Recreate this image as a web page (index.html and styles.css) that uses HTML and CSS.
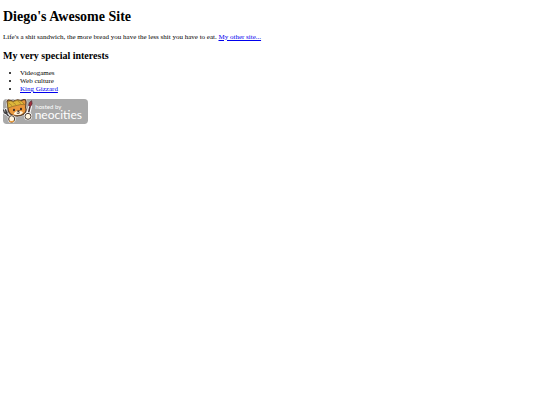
FILE: index.html
```
<!doctype html>
<html lang="en">

<head>
    <meta charset="utf-8">
    <meta name="viewport" content="width=device-width, initial-scale=1">
    <title>Diego's Awesome Site</title>
    <link rel="stylesheet" href="styles.css">
</head>

<body>
<h1>Diego's Awesome Site</h1>
<p>Life's a shit sandwich, the more bread you have the less shit you have to eat. <a href="#">My other site...</a></p>
<h2>My very special interests</h2>
<ul>
    <li>Videogames</li>
    <li>Web culture</li>
    <li><a href="#">King Gizzard</a></li>
</ul>
<!-- hosting badge -->
<a class="badge" href="#" aria-label="hosted by neocities">
    <svg width="85" height="25" viewBox="0 0 255 75">
        <rect width="255" height="75" rx="11" fill="#a9a9a9"/>
        <!-- fork -->
        <path d="M19 54L9 42M2 33L4 41Q7 45 12 42L14 31M8 32L9 41" fill="none" stroke="#fff" stroke-width="8" stroke-linecap="round"/>
        <path d="M19 54L9 42M2 33L4 41Q7 45 12 42L14 31M8 32L9 41" fill="none" stroke="#39383b" stroke-width="4" stroke-linecap="round"/>
        <!-- brush -->
        <path d="M76 44L82 21" stroke="#fff" stroke-width="11" stroke-linecap="round"/>
        <path d="M76 44L81 23" stroke="#4b3434" stroke-width="5"/>
        <path d="M77 20Q77 9 86 5Q90 14 83 23Z" fill="#a42f3c" stroke="#49262d" stroke-width="2"/>
        <!-- cat -->
        <path d="M15 24L12 7Q13 1 22 4L31 7Q43 -1 53 5L64 1Q70 2 69 12L68 26Q73 39 61 46Q47 54 30 49Q13 43 15 24Z" fill="#e99a3b" stroke="#fff" stroke-width="7"/>
        <path d="M15 24L12 7Q13 1 22 4L31 7Q43 -1 53 5L64 1Q70 2 69 12L68 26Q73 39 61 46Q47 54 30 49Q13 43 15 24Z" fill="#e9973b" stroke="#5b402b" stroke-width="4"/>
        <path d="M15 27L14 9Q20 3 31 8Q44 0 56 7L65 17Q53 15 43 19Q30 21 15 27Z" fill="#dfb83a" stroke="#886627" stroke-width="2"/>
        <path d="M17 12L27 20M28 9L39 17M43 5L54 14" stroke="#9c762b" stroke-width="2"/>
        <path d="M32 45Q36 36 45 36Q55 35 60 40Q58 47 46 48Q36 49 32 45Z" fill="#fff4dd"/>
        <ellipse cx="33" cy="33" rx="3" ry="4" fill="#35261f"/>
        <ellipse cx="54" cy="30" rx="3" ry="4" fill="#35261f"/>
        <path d="M43 36L49 35L47 39ZM41 42Q45 45 51 41" fill="#35261f" stroke="#35261f" stroke-width="2"/>
        <!-- paws -->
        <ellipse cx="26" cy="60" rx="12" ry="12" fill="#fff"/>
        <ellipse cx="26" cy="60" rx="9" ry="10" fill="#fff5df" stroke="#493c35" stroke-width="3"/>
        <path d="M19 66Q26 71 33 65" fill="none" stroke="#e99a3b" stroke-width="4"/>
        <ellipse cx="75" cy="52" rx="12" ry="12" fill="#fff"/>
        <ellipse cx="75" cy="52" rx="9" ry="9" fill="#fff5df" stroke="#493c35" stroke-width="3"/>
        <text class="badge-small" x="97" y="29">hosted by</text>
        <text class="badge-name" x="95" y="60">neocities</text>
    </svg>
</a>
</body>

</html>
```

FILE: styles.css
```
body {
    margin: 9px 3px;
    font-family: "Liberation Serif", "Times New Roman", serif;
    font-size: 7px;
    line-height: 8px;
    color: #000;
    background-color: #fff;
}

h1 {
    margin: 0 0 8px;
    font-size: 14px;
    line-height: 16px;
}

h2 {
    margin: 9px 0 7px;
    font-size: 10px;
    line-height: 12px;
}

p {
    margin: 0;
}

ul {
    margin: 0 0 6px;
    padding-left: 17px;
}

a {
    color: #00e;
}

.badge {
    display: inline-block;
}

.badge svg {
    display: block;
}

.badge text {
    font-family: Lato, "Noto Sans", sans-serif;
    fill: #fff;
}

.badge-small {
    font-size: 18px;
}

.badge-name {
    font-size: 36px;
}
```
